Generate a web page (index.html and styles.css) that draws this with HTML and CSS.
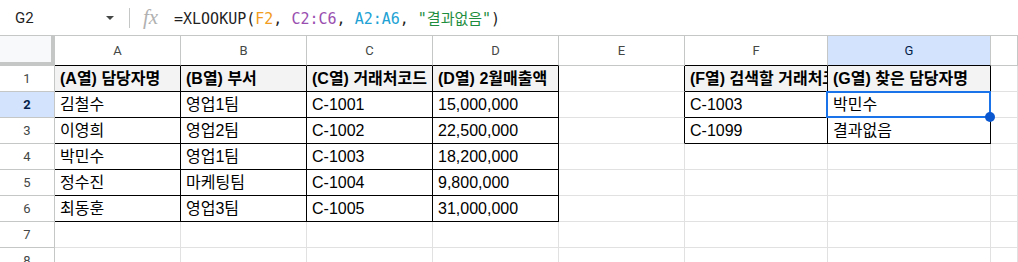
FILE: index.html
```html
<!DOCTYPE html>
<html lang="ko">
<head>
    <meta charset="UTF-8">
    <meta name="viewport" content="width=device-width, initial-scale=1.0">
    <title>XLOOKUP</title>
    <link rel="stylesheet" href="styles.css">
</head>
<body>

    <!-- 수식 입력줄 -->
    <div class="formula-bar">
        <div class="name-box">
            <span class="cell-ref">G2</span>
            <span class="caret"></span>
        </div>
        <div class="divider"></div>
        <span class="fx">fx</span>
        <div class="formula">=XLOOKUP(<span class="ref-f">F2</span>, <span class="ref-c">C2:C6</span>, <span class="ref-a">A2:A6</span>, <span class="ref-str">"결과없음"</span>)</div>
    </div>

    <!-- 시트 -->
    <div class="sheet">
        <div class="corner"></div>
        <div class="col-head edge">A</div>
        <div class="col-head edge">B</div>
        <div class="col-head edge">C</div>
        <div class="col-head edge">D</div>
        <div class="col-head">E</div>
        <div class="col-head edge">F</div>
        <div class="col-head edge active">G</div>
        <div class="col-head"></div>

        <div class="row-head">1</div>
        <div class="cell t head">(A열) 담당자명</div>
        <div class="cell t head">(B열) 부서</div>
        <div class="cell t head">(C열) 거래처코드</div>
        <div class="cell t head">(D열) 2월매출액</div>
        <div class="cell t-left"></div>
        <div class="cell t head">(F열) 검색할 거래처코드</div>
        <div class="cell t head">(G열) 찾은 담당자명</div>
        <div class="cell"></div>

        <div class="row-head active">2</div>
        <div class="cell t">김철수</div>
        <div class="cell t">영업1팀</div>
        <div class="cell t">C-1001</div>
        <div class="cell t">15,000,000</div>
        <div class="cell t-left"></div>
        <div class="cell t">C-1003</div>
        <div class="cell t selected">박민수
            <div class="sel-box"></div>
            <div class="sel-handle"></div>
        </div>
        <div class="cell"></div>

        <div class="row-head">3</div>
        <div class="cell t">이영희</div>
        <div class="cell t">영업2팀</div>
        <div class="cell t">C-1002</div>
        <div class="cell t">22,500,000</div>
        <div class="cell t-left"></div>
        <div class="cell t">C-1099</div>
        <div class="cell t">결과없음</div>
        <div class="cell"></div>

        <div class="row-head">4</div>
        <div class="cell t">박민수</div>
        <div class="cell t">영업1팀</div>
        <div class="cell t">C-1003</div>
        <div class="cell t">18,200,000</div>
        <div class="cell"></div>
        <div class="cell"></div>
        <div class="cell"></div>
        <div class="cell"></div>

        <div class="row-head">5</div>
        <div class="cell t">정수진</div>
        <div class="cell t">마케팅팀</div>
        <div class="cell t">C-1004</div>
        <div class="cell t">9,800,000</div>
        <div class="cell"></div>
        <div class="cell"></div>
        <div class="cell"></div>
        <div class="cell"></div>

        <div class="row-head">6</div>
        <div class="cell t">최동훈</div>
        <div class="cell t">영업3팀</div>
        <div class="cell t">C-1005</div>
        <div class="cell t">31,000,000</div>
        <div class="cell"></div>
        <div class="cell"></div>
        <div class="cell"></div>
        <div class="cell"></div>

        <div class="row-head">7</div>
        <div class="cell"></div>
        <div class="cell"></div>
        <div class="cell"></div>
        <div class="cell"></div>
        <div class="cell"></div>
        <div class="cell"></div>
        <div class="cell"></div>
        <div class="cell"></div>

        <div class="row-head">8</div>
        <div class="cell"></div>
        <div class="cell"></div>
        <div class="cell"></div>
        <div class="cell"></div>
        <div class="cell"></div>
        <div class="cell"></div>
        <div class="cell"></div>
        <div class="cell"></div>
    </div>

</body>
</html>
```

FILE: styles.css
```css
body {
    margin: 0;
    background: #ffffff;
    overflow: hidden;
    font-family: "Liberation Sans", "Noto Sans CJK KR", sans-serif;
    color: #000000;
}

/* 수식 입력줄 */
.formula-bar {
    display: flex;
    align-items: center;
    height: 35px;
    border-bottom: 1px solid #c4c7c5;
}

.name-box {
    width: 129px;
    box-sizing: border-box;
    padding-left: 15px;
    display: flex;
    align-items: center;
}

.cell-ref {
    font-family: Roboto, sans-serif;
    font-size: 15px;
    color: #1f1f1f;
}

.caret {
    margin-left: auto;
    margin-right: 15px;
    width: 0;
    height: 0;
    border-left: 4.5px solid transparent;
    border-right: 4.5px solid transparent;
    border-top: 4px solid #444746;
}

.divider {
    width: 1px;
    height: 20px;
    background: #c4c7c5;
}

.fx {
    margin-left: 13px;
    width: 31px;
    font-family: "Liberation Serif", serif;
    font-style: italic;
    font-size: 21px;
    color: #b1b1b1;
    line-height: 1;
}

.formula {
    font-family: "DejaVu Sans Mono", "Noto Sans CJK KR", monospace;
    font-size: 15px;
    color: #1f1f1f;
    white-space: nowrap;
}

.ref-f { color: #f29d1d; }
.ref-c { color: #9a4fb0; }
.ref-a { color: #22a2d4; }
.ref-str { color: #1e8e3e; }

/* 시트 */
.sheet {
    display: grid;
    grid-template-columns: 55px repeat(5, 126px) 143px 163px 1fr;
    grid-template-rows: 30px;
    grid-auto-rows: 26px;
}

.corner {
    background: #f8f9fa;
    border-right: 4px solid #c4c7c5;
    border-bottom: 4px solid #c4c7c5;
}

.col-head {
    display: flex;
    align-items: center;
    justify-content: center;
    border-right: 1px solid #c4c7c5;
    border-bottom: 1px solid #c4c7c5;
    font-family: Roboto, sans-serif;
    font-size: 13px;
    color: #444746;
}

.col-head.edge {
    border-bottom-color: #000000;
}

.col-head.active {
    background: #d3e3fd;
    color: #041e49;
}

.row-head {
    display: flex;
    align-items: center;
    justify-content: center;
    border-right: 1px solid #c4c7c5;
    border-bottom: 1px solid #c4c7c5;
    font-family: Roboto, sans-serif;
    font-size: 13px;
    color: #444746;
}

.row-head.active {
    background: #d3e3fd;
    color: #041e49;
    font-weight: bold;
}

.cell {
    display: flex;
    align-items: flex-end;
    padding: 0 5px 3px;
    border-right: 1px solid #e1e1e1;
    border-bottom: 1px solid #e1e1e1;
    font-size: 16px;
    line-height: 18px;
    white-space: nowrap;
    overflow: hidden;
}

.cell.t {
    border-right-color: #000000;
    border-bottom-color: #000000;
}

.cell.t-left {
    border-right-color: #000000;
}

.cell.head {
    background: #f3f3f3;
    font-weight: bold;
}

.cell.selected {
    position: relative;
    overflow: visible;
}

.sel-box {
    position: absolute;
    top: -1px;
    left: -2px;
    right: -1px;
    bottom: -1px;
    border: 2px solid #1a73e8;
}

.sel-handle {
    position: absolute;
    right: -5px;
    bottom: -5px;
    width: 10px;
    height: 10px;
    border-radius: 50%;
    background: #0b57d0;
    z-index: 2;
}
```
